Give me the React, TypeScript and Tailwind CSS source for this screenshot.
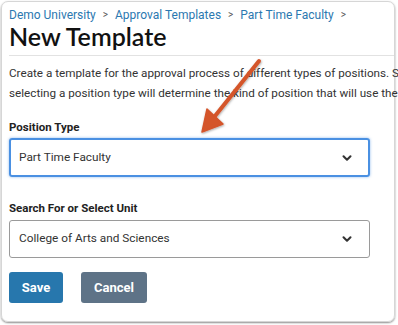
import { ChevronDown } from 'lucide-react';

function SelectBox({ value, focused }: { value: string; focused?: boolean }) {
  return (
    <div
      className={
        focused
          ? 'flex items-center justify-between h-[39px] w-[361px] rounded-[3px] border-2 border-[#4a90e2] shadow-[0_0_3px_rgba(74,144,226,0.6)] pl-[8px] pr-[14px]'
          : 'flex items-center justify-between h-[38px] w-[361px] rounded-[3px] border border-[#9a9a9a] pl-[9px] pr-[15px]'
      }
    >
      <span className="text-[11.8px] text-[#333]">{value}</span>
      <ChevronDown className="w-[14px] h-[14px] text-[#333]" strokeWidth={3.5} />
    </div>
  );
}

export default function App() {
  return (
    <div className="relative w-[398px] h-[325px] overflow-hidden bg-white" style={{ fontFamily: 'Roboto, "Liberation Sans", sans-serif' }}>
      <div className="ml-[1px] mt-[1px] w-[394px] h-[321px] rounded-[7px] border border-[#d6d6d6] shadow-[0_1px_2px_rgba(0,0,0,0.45)]">
        <div className="pl-[7px] pt-[5px]">
          <div className="flex items-center gap-[7px] text-[12px] text-[#2b78b0] leading-[16px]">
            <span>Demo University</span>
            <span className="text-[#555] text-[10px]">&gt;</span>
            <span>Approval Templates</span>
            <span className="text-[#555] text-[10px]">&gt;</span>
            <span>Part Time Faculty</span>
            <span className="text-[#555] text-[10px]">&gt;</span>
          </div>
          <h1 className="text-[25px] leading-[27px] font-semibold text-[#111]" style={{ fontFamily: 'Lato, sans-serif' }}>
            New Template
          </h1>
        </div>
        <div className="mt-[5px] ml-[7px] h-px bg-[#e2e2e2]" />
        <div className="pl-[7px] pt-[7px]">
          <p className="text-[11.7px] leading-[20px] text-[#333] whitespace-nowrap">
            Create a template for the approval process of different types of positions. S
            <br />
            selecting a position type will determine the kind of position that will use the
          </p>
          <div className="mt-[16px] text-[11.5px] leading-[16px] font-bold text-[#222]">Position Type</div>
          <div className="mt-[3px]">
            <SelectBox value="Part Time Faculty" focused />
          </div>
          <div className="mt-[23px] text-[11.5px] leading-[16px] font-bold text-[#222]">Search For or Select Unit</div>
          <div className="mt-[4px]">
            <SelectBox value="College of Arts and Sciences" />
          </div>
          <div className="mt-[14px] flex gap-[18px]">
            <button className="h-[31px] w-[54px] rounded-[3px] bg-[#2777ad] text-white text-[13px] font-bold">Save</button>
            <button className="h-[31px] w-[66px] rounded-[3px] bg-[#5e7387] text-white text-[13px] font-bold">Cancel</button>
          </div>
        </div>
      </div>
      <svg className="absolute left-0 top-0 pointer-events-none" width="398" height="325" viewBox="0 0 398 325">
        <defs>
          <filter id="sh" x="-20%" y="-20%" width="140%" height="140%">
            <feDropShadow dx="0.5" dy="1" stdDeviation="0.8" floodColor="#000" floodOpacity="0.35" />
          </filter>
        </defs>
        <g filter="url(#sh)" fill="#d4542a" stroke="#d4542a">
          <line x1="259" y1="61" x2="215" y2="116" strokeWidth="4" strokeLinecap="round" />
          <polygon points="202,132 207,109 223,124" strokeWidth="1.5" strokeLinejoin="round" />
        </g>
      </svg>
    </div>
  );
}
